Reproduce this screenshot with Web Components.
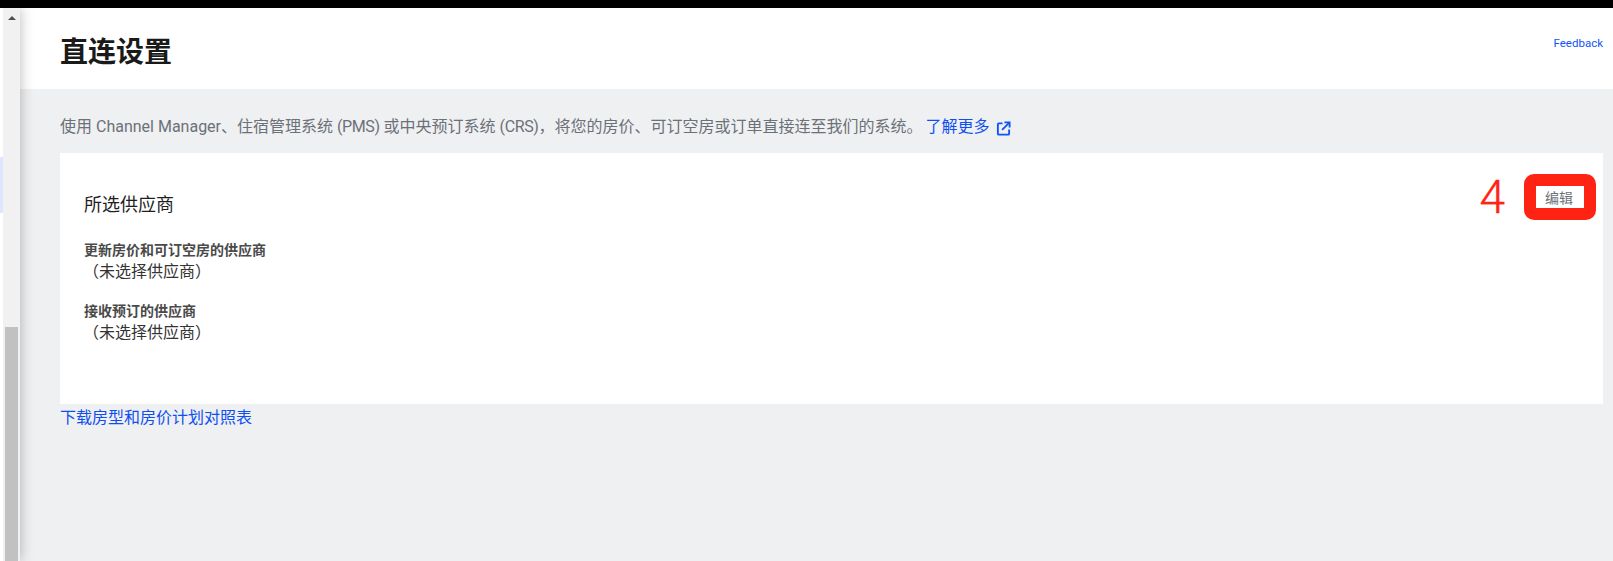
<!DOCTYPE html>
<html lang="zh">
<head>
<meta charset="utf-8">
<title>直连设置</title>
<style>
    html, body {
        margin: 0;
        height: 100%;
        overflow: hidden;
        font-family: Roboto, "Noto Sans CJK SC", sans-serif;
    }
</style>
</head>
<body>
<app-shell>
    <page-header slot="header" heading="直连设置"></page-header>
    <intro-text>使用 Channel Manager、住宿管理系统 <abbr-tag>(PMS)</abbr-tag> 或中央预订系统 <abbr-tag>(CRS)</abbr-tag>，将您的房价、可订空房或订单直接连至我们的系统。</intro-text>
    <provider-card>
        <provider-row label="更新房价和可订空房的供应商"></provider-row>
        <provider-row label="接收预订的供应商"></provider-row>
    </provider-card>
    <a-link>下载房型和房价计划对照表</a-link>
</app-shell>

<script>
const fontStack = `Roboto, "Noto Sans CJK SC", sans-serif`;

class AppShell extends HTMLElement {
    constructor() {
        super();
        this.attachShadow({ mode: 'open' });
        this.shadowRoot.innerHTML = `
<style>
    :host { display: flex; flex-direction: column; height: 100vh; background: #000; }
    .top { height: 8px; flex: none; background: #000; }
    .row { display: flex; flex: 1; min-height: 0; background: #eff0f2; }
    .rail { width: 3px; flex: none; background: #fff; padding-top: 149px; box-sizing: border-box; position: relative; z-index: 1; }
    .rail i { display: block; height: 56px; background: #dde6fd; }
    .bar { width: 17px; flex: none; background: #f1f1f1; display: flex; flex-direction: column; align-items: center; box-shadow: 0 0 14px rgba(0,0,0,.28); position: relative; }
    .arrow { margin-top: 8px; width: 0; height: 0; border-left: 4px solid transparent; border-right: 4px solid transparent; border-bottom: 4px solid #505050; }
    .thumb { margin-top: auto; width: 13px; height: 234px; background: #c1c1c1; }
    main { flex: 1; min-width: 0; }
    .body { padding: 0 10px 0 40px; }
</style>
<div class="top"></div>
<div class="row">
    <div class="rail"><i></i></div>
    <div class="bar"><span class="arrow"></span><span class="thumb"></span></div>
    <main>
        <slot name="header"></slot>
        <div class="body"><slot></slot></div>
    </main>
</div>`;
    }
}

class PageHeader extends HTMLElement {
    constructor() {
        super();
        this.attachShadow({ mode: 'open' });
        this.shadowRoot.innerHTML = `
<style>
    :host { display: flex; justify-content: space-between; height: 81px; background: #fff; padding: 0 10px 0 40px; font-family: ${fontStack}; }
    h1 { margin: 0; padding-top: 25px; font-size: 28px; line-height: 40px; font-weight: 700; color: #1a1a1a; }
    a { padding-top: 27px; font-size: 11.5px; line-height: 16px; color: #0f55f5; }
</style>
<h1>${this.getAttribute('heading')}</h1>
<a>Feedback</a>`;
    }
}

class AbbrTag extends HTMLElement {
    constructor() {
        super();
        this.attachShadow({ mode: 'open' });
        this.shadowRoot.innerHTML = `
<style>
    :host { display: inline; letter-spacing: -.4px; }
</style>
<slot></slot>`;
    }
}

class IntroText extends HTMLElement {
    constructor() {
        super();
        this.attachShadow({ mode: 'open' });
        this.shadowRoot.innerHTML = `
<style>
    :host { display: block; height: 64px; padding-top: 26px; box-sizing: border-box; font-family: ${fontStack}; font-size: 16px; line-height: 24px; color: #6c7178; white-space: nowrap; }
    a { color: #0f4ff0; margin-left: 3px; }
    svg { width: 15px; height: 15px; vertical-align: -4px; margin-left: 3px; }
</style>
<slot></slot><a>了解更多</a>
<svg viewBox="0 0 16 16" fill="none" stroke="#0f55f5" stroke-width="2"><path d="M7 2.500H3a1 1 0 0 0-1 1v10a1 1 0 0 0 1 1h10a1 1 0 0 0 1-1V9"/><path d="M6.500 9.500L14 2"/><path d="M9 1.500h5.500V7"/></svg>`;
    }
}

class ProviderCard extends HTMLElement {
    constructor() {
        super();
        this.attachShadow({ mode: 'open' });
        this.shadowRoot.innerHTML = `
<style>
    :host { display: flex; justify-content: space-between; height: 251px; box-sizing: border-box; padding: 0 7px 0 24px; background: #fff; font-family: ${fontStack}; }
    h2 { margin: 0; padding: 39px 0 23px; font-size: 18px; line-height: 26px; font-weight: 400; color: #1f1f1f; }
    .side { display: flex; padding-top: 21px; align-items: flex-start; }
    .num { font-weight: 300; font-size: 46px; line-height: 46px; color: #ff2314; margin-right: 19px; -webkit-text-stroke: .4px #ff2314; }
    .hl { width: 72px; height: 46px; box-sizing: border-box; border: 12px solid #ff2314; border-radius: 10px; background: #fff; background-clip: padding-box; display: flex; align-items: center; justify-content: center; padding-right: 2px; font-size: 14px; color: #6c7178; }
</style>
<div>
    <h2>所选供应商</h2>
    <slot></slot>
</div>
<div class="side"><span class="num">4</span><span class="hl">编辑</span></div>`;
    }
}

class ProviderRow extends HTMLElement {
    constructor() {
        super();
        this.attachShadow({ mode: 'open' });
        this.shadowRoot.innerHTML = `
<style>
    :host { display: block; margin-bottom: 18px; font-family: ${fontStack}; }
    b { display: block; font-size: 14px; line-height: 19px; font-weight: 700; color: #4a4a4a; }
    span { display: block; font-size: 16px; line-height: 24px; color: #333; margin-left: -1px; }
</style>
<b>${this.getAttribute('label')}</b>
<span>（未选择供应商）</span>`;
    }
}

class ALink extends HTMLElement {
    constructor() {
        super();
        this.attachShadow({ mode: 'open' });
        this.shadowRoot.innerHTML = `
<style>
    :host { display: block; padding-top: 2px; font-family: ${fontStack}; font-size: 16px; line-height: 24px; color: #0f4ff0; }
</style>
<slot></slot>`;
    }
}

customElements.define('app-shell', AppShell);
customElements.define('page-header', PageHeader);
customElements.define('abbr-tag', AbbrTag);
customElements.define('intro-text', IntroText);
customElements.define('provider-card', ProviderCard);
customElements.define('provider-row', ProviderRow);
customElements.define('a-link', ALink);
</script>
</body>
</html>
